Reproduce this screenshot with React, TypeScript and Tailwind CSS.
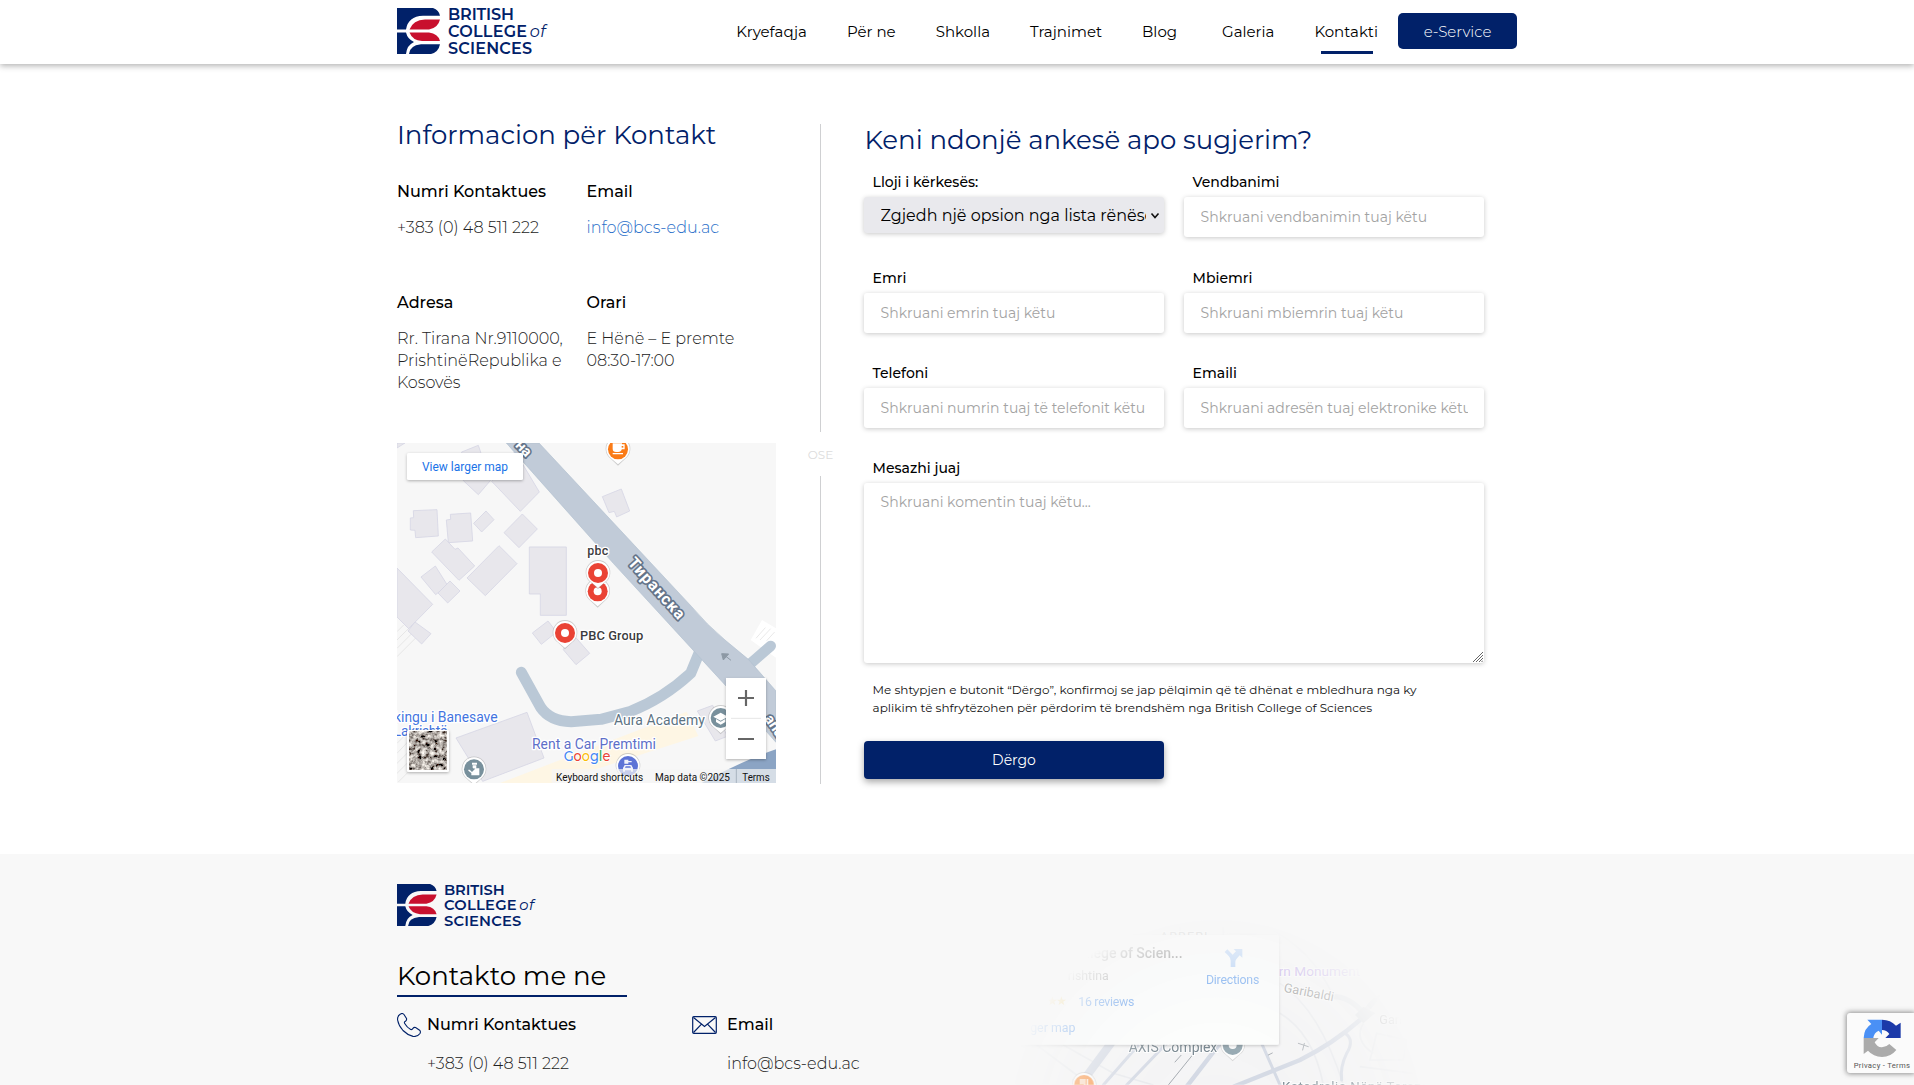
import type { ReactNode } from "react";

const NAV = ["Kryefaqja", "Për ne", "Shkolla", "Trajnimet", "Blog", "Galeria", "Kontakti"];

function Logo({ className }: { className: string }) {
  return (
    <svg viewBox="0 0 151 46" preserveAspectRatio="none" overflow="visible" className={className}>
      <g fill="#012169">
        <path d="M0 0H36Q42 2 43 7.8H26Q11 8.500 9 21.500H0Z" />
        <path d="M0 24.500H9Q10.500 31 17 34Q10 37 9 46H0Z" />
        <path d="M24 36.200H43Q41.500 44 34 46H12Q12.500 37.500 24 36.200Z" />
      </g>
      <g fill="#c8102e">
        <path d="M43 11.500H28Q16 12 12.500 21.500H32Q41 20 43 11.500Z" />
        <path d="M12.500 24.500H32Q41 25.500 43 33H25Q15.500 32.500 12.500 24.500Z" />
      </g>
      <g className="font-['Montserrat',sans-serif] text-[16px] font-semibold" fill="#012169">
        <text x="51" y="12.300" textLength="66">BRITISH</text>
        <text x="51" y="28.900" textLength="79">COLLEGE</text>
        <text x="51" y="45.600" textLength="84">SCIENCES</text>
        <text x="132.700" y="28.900" className="font-normal italic" textLength="16">of</text>
      </g>
    </svg>
  );
}

function Pin({ x, y, fill, children }: { x: number; y: number; fill: string; children?: ReactNode }) {
  return (
    <g transform={`translate(${x} ${y})`}>
      <path d="M0 49L-22 28A37 37 0 1 1 22 28Z" fill="#9a9a9a" opacity=".45" />
      <path d="M0 45L-22 26A35 35 0 1 1 22 26Z" fill="#fff" />
      <circle r="30" fill={fill} />
      {children ?? <circle r="12" fill="#fff" />}
    </g>
  );
}

function ContactMap() {
  return (
    <svg viewBox="0 0 379 340" className="block h-[340px] w-[379px] font-['Roboto',sans-serif]">
      <defs>
        <filter id="terrain" x="0" y="0" width="100%" height="100%">
          <feTurbulence type="fractalNoise" baseFrequency="0.08" numOctaves="4" seed="8" />
          <feColorMatrix values="1.900 0 0 0 -.5  1.850 0 0 0 -.51  1.750 0 0 0 -.49  0 0 0 0 1" />
        </filter>
        <filter id="soft" x="-20%" y="-20%" width="140%" height="150%">
          <feDropShadow dx="0" dy="3" stdDeviation="4" floodOpacity=".3" />
        </filter>
      </defs>
      <rect width="379" height="340" fill="#f7f7f7" />
      <g transform="translate(-17 -13) scale(.33333)">
        <path d="M1112 630L1146 570L1200 602V692Z" fill="#fff" />
        <path d="M1128 625l28-32M1140 630l32-34M1160 632l24-26M51 605l20-20M51 630l50-50M51 655l65-65M51 680l65-65" stroke="#dedede" strokeWidth="2" />
        <path d="M51 940l30-30M51 970l32-34M51 1000l34-34M51 1030l38-38M55 1056l34-34" stroke="#dedede" strokeWidth="2" />
        <path d="M360 1059L920 845L955 918L520 1059Z" fill="#fef6e4" />
        <g fill="#e8e7ec" stroke="#d6d6e4" strokeWidth="2.500">
          <path d="M51 39h24L51 54Z" />
          <path d="M245 66l50-20 36 106-36 42-45-42Z" />
          <path d="M335 154l70-90 73 122-57 58Z" />
          <path d="M100 242l71-3 4 79-68 5-2-22-14-1 0-36 10-1Z" />
          <path d="M211 253l61-4 6 84-73 5-6-68 13-2Z" />
          <path d="M281 280l37-37 24 26-37 37Z" />
          <path d="M372 308l55-56 45 45-55 56Z" />
          <path d="M155 366l41-39 29 31 9-4 50 54-47 43Z" />
          <path d="M261 444l96-97 54 54-95 96Z" />
          <path d="M123 441l43-33 36 57-35 29Z" />
          <path d="M174 489l36-36 30 30-37 36Z" />
          <path d="M51 414l107 109-72 73-35-35Z" />
          <path d="M84 603l21-27 48 35-28 31Z" />
          <path d="M448 351h111v205h-78v-64h-33Z" />
          <path d="M457 609l47-36 26 33-46 37Z" />
          <path d="M549 658l38-36 42 48-41 34Z" />
          <path d="M667 200l57-23 25 66-39 18-7-17-16 4Z" />
          <path d="M228 924l213-77 51 137-184 70Z" />
          <path d="M952 843l46-17 44 93-36 14Z" />
        </g>
        <path d="M424 727L482 832Q510 873 573 875L663 868L750 845Q850 806 932 730L965 650" fill="none" stroke="#bac8d6" strokeWidth="33" strokeLinecap="round" strokeLinejoin="round" />
        <path d="M1110 702L1172 648" stroke="#bac8d6" strokeWidth="32" strokeLinecap="round" />
        <path d="M379 39H477L935 530Q980 584 1035 630L1105 688L1188 783V937L1040 770L700 400Z" fill="#c1cbd8" stroke="#b1bfce" strokeWidth="2" />
        <path d="M965 1059Q1080 995 1188 958V1059Z" fill="#8ba4c4" />
        <path d="M1053 691l-23-18M1025 671l21 1-16 18Z" stroke="#8d99a5" fill="#8d99a5" strokeWidth="3" />
        <g className="font-bold" fill="#fff" stroke="#647489" strokeWidth="10" paintOrder="stroke" strokeLinejoin="round">
          <text transform="translate(741 400) rotate(48)" fontSize="48" textLength="230">Тиранска</text>
          <text transform="translate(404 48) rotate(46)" fontSize="44">на</text>
          <text transform="translate(1152 866) rotate(56)" fontSize="44">ana</text>
        </g>
        <g stroke="#fff" strokeWidth="8" paintOrder="stroke" strokeLinejoin="round">
          <g className="font-medium" fill="#3c3c40">
            <text x="622" y="374" fontSize="38" textLength="63">pbc</text>
          </g>
          <g fill="#4374e0" fontSize="42">
            <text x="42" y="876" textLength="311">kingu i Banesave</text>
            <text x="42" y="918" textLength="160">Lakrishtë</text>
          </g>
        </g>
        <Pin x={653} y={484} fill="#ea4335" />
        <Pin x={654} y={429} fill="#ea4335" />
        <Pin x={555} y={609} fill="#ea4335" />
        <Pin x={714} y={58} fill="#fa7b17">
          <path d="M-14-16H10V-2Q8 6 0 6H-5Q-14 6-14-2ZM10-13H18V-2H10M-16 13H15" fill="#fff" stroke="#fff" strokeWidth="4" />
          <path d="M11-10h5v5h-5Z" fill="#fa7b17" />
        </Pin>
        <Pin x={1022} y={864} fill="#78909c">
          <path d="M0-16L22-4 0 8-22-4ZM-14 3V12L0 20 14 12V3L0 11Z" fill="#fff" />
        </Pin>
        <Pin x={744} y={1008} fill="#5c73d6">
          <path d="M-11-19H1V-15H11V-11H1V-7H-11ZM-10-3H10L15 6V17H9V13H-9V17H-15V6Z" fill="#fff" opacity=".9" />
          <path d="M-7 1H7L9 5H-9Z" fill="#5c73d6" />
        </Pin>
        <Pin x={282} y={1018} fill="#78909c">
          <path d="M-6-20H9V-14H-6ZM-4-12H7V-5Q2 0-4-5ZM-17 1H-13L-6 8 5-3H16V18H-8V11L-17 4Z" fill="#fff" />
        </Pin>
        <g stroke="#fff" strokeWidth="8" paintOrder="stroke" strokeLinejoin="round">
          <text x="600" y="629" fontSize="39" className="font-medium" fill="#3c3c40" textLength="190">PBC Group</text>
          <text x="702" y="886" fontSize="42" fill="#5d7383" textLength="273">Aura Academy</text>
          <text x="456" y="958" fontSize="42" fill="#5e6fc9" textLength="372">Rent a Car Premtimi</text>
        </g>
        <text x="551" y="993" stroke="#fff" strokeWidth="5" paintOrder="stroke" fontSize="43" textLength="140" lengthAdjust="spacingAndGlyphs" className="font-['Montserrat',sans-serif] font-medium">
          <tspan fill="#4285f4">G</tspan><tspan fill="#ea4335">o</tspan><tspan fill="#fbbc04">o</tspan><tspan fill="#4285f4">g</tspan><tspan fill="#34a853">l</tspan><tspan fill="#ea4335">e</tspan>
        </text>
        <rect x="515" y="1017" width="673" height="42" fill="#f5f5f5" opacity=".7" />
        <path d="M1069 1017V1059" stroke="#a9b5c0" strokeWidth="3" />
        <g fill="#111" fontSize="32">
          <text x="528" y="1053" textLength="262" lengthAdjust="spacingAndGlyphs">Keyboard shortcuts</text>
          <text x="825" y="1053" textLength="225" lengthAdjust="spacingAndGlyphs">Map data ©2025</text>
          <text x="1087" y="1053" textLength="82" lengthAdjust="spacingAndGlyphs">Terms</text>
        </g>
        <g filter="url(#soft)">
          <rect x="81" y="69" width="348" height="81" rx="5" fill="#fff" />
          <rect x="1038" y="744" width="120" height="243" fill="#fff" />
          <rect x="81" y="900" width="126" height="126" rx="5" fill="#fff" />
        </g>
        <rect x="87" y="906" width="114" height="114" filter="url(#terrain)" />
        <text x="126" y="123" fontSize="37" fill="#1a73e8" textLength="258" lengthAdjust="spacingAndGlyphs">View larger map</text>
        <path d="M1053 865H1143" stroke="#e6e6e6" strokeWidth="3" />
        <path d="M1074 804H1122M1098 780V828M1074 927H1122" stroke="#666" strokeWidth="6.500" />
      </g>
    </svg>
  );
}

function FooterMap() {
  return (
    <svg viewBox="0 0 1440 555" className="absolute top-[46px] left-[980px] h-[185px] w-[480px] font-['Roboto',sans-serif]">
      <defs>
        <radialGradient id="fade" gradientUnits="userSpaceOnUse" cx="710" cy="680" r="640">
          <stop offset="0" stopColor="#fff" stopOpacity=".9" />
          <stop offset=".4" stopColor="#fff" stopOpacity=".72" />
          <stop offset=".7" stopColor="#fff" stopOpacity=".4" />
          <stop offset="1" stopColor="#fff" stopOpacity="0" />
        </radialGradient>
        <mask id="disc">
          <rect width="1440" height="555" fill="url(#fade)" />
        </mask>
        <filter id="cardShadow">
          <feDropShadow dx="0" dy="3" stdDeviation="4" floodOpacity=".3" />
        </filter>
      </defs>
      <g mask="url(#disc)">
        <rect width="1440" height="555" fill="#f3f3f4" />
        <g fill="none" stroke="#e4e6ea" strokeWidth="5">
          <path d="M150 420L330 555M250 435L400 520L520 555M860 80Q1000 150 1060 290M900 250Q1020 330 1090 555M900 340Q1000 400 1030 555M1150 340L1250 230M1170 480L1190 400L1280 420L1270 480ZM1140 500L1300 520M600 80V110M730 80V105M1150 370Q1120 420 1180 460" />
        </g>
        <g fill="none" stroke="#c9d0de" strokeLinecap="round">
          <path d="M300 555L400 420" strokeWidth="24" />
          <path d="M370 555L480 430M440 555L560 430M845 430L900 555M1095 400Q1125 420 1100 460Q1080 500 1085 540" strokeWidth="9" />
          <path d="M620 560L720 430" strokeWidth="13" />
          <path d="M760 560L960 480Q1060 430 1140 360" strokeWidth="13" />
          <path d="M1060 290Q1110 290 1150 340L1185 300" strokeWidth="16" stroke="#dde1e6" />
          <path d="M1125 345L1150 320L1185 340L1150 370Z" fill="#d5d9de" stroke="none" />
          <path d="M565 555L690 400M585 486l18-20M955 430l30 10M968 450l5-20M865 465l12-6" strokeWidth="3" stroke="#8d949c" />
        </g>
        <g stroke="#fff" strokeWidth="6" paintOrder="stroke">
          <text x="540" y="124" fontSize="38" fill="#777" letterSpacing="3">ARBERI</text>
          <text x="896" y="228" fontSize="41" fill="#8e63dd" textLength="245">rn Monument</text>
          <text transform="translate(910 275) rotate(11)" fontSize="38" fill="#555" textLength="152">Garibaldi</text>
          <text x="1198" y="372" fontSize="38" fill="#666">Gari</text>
          <text x="446" y="457" fontSize="42" fill="#4d616d" textLength="266">AXIS Complex</text>
          <text x="906" y="572" fontSize="40" fill="#4d616d" textLength="440">Katedralja Nënë Tereza</text>
        </g>
        <Pin x={758} y={435} fill="#78909c" />
        <Pin x={312} y={555} fill="#fa7b17">
          <path d="M-10-18V-2M-4-18V-2M2-18V0M10-18V0" stroke="#fff" strokeWidth="4" />
        </Pin>
        <rect x="-20" y="105" width="917" height="329" rx="5" fill="#fdfffe" filter="url(#cardShadow)" />
        <text x="608" y="174" textAnchor="end" fontSize="42" className="font-medium" fill="#222">llege of Scien...</text>
        <text x="386" y="239" textAnchor="end" fontSize="37" fill="#444">rishtina</text>
        <text x="200" y="314" fontSize="36" fill="#f5b400" textLength="60">★★</text>
        <g fill="#1a73e8" fontSize="37">
          <text x="295" y="318" textLength="168">16 reviews</text>
          <text x="286" y="396" textAnchor="end">ger map</text>
          <text x="678" y="252" textLength="160">Directions</text>
        </g>
        <path d="M752 201V182Q752 174 746 168L734 156L742 148L758 164L768 154L761 147H787V173L779 166L770 176Q766 180 766 186V201Z" fill="#7fb2f5" />
      </g>
    </svg>
  );
}

function Info({ title, children }: { title: string; children: ReactNode }) {
  return (
    <div>
      <h3 className="font-medium text-black">{title}</h3>
      <div className="mt-[14px] font-light text-[#222]">{children}</div>
    </div>
  );
}

function Field({ label, placeholder }: { label: string; placeholder: string }) {
  return (
    <label className="block text-[14px] leading-5">
      <span className="ml-[8.6px] block font-medium text-black">{label}</span>
      <input
        placeholder={placeholder}
        className="mt-[5px] block h-10 w-full rounded-[3px] bg-white pr-4 pl-[16.6px] font-normal shadow-[0_1px_5px_rgba(0,0,0,0.22)] placeholder:text-[#a3a3a3]"
      />
    </label>
  );
}

function RecaptchaBadge() {
  return (
    <div className="absolute top-[1013px] right-0 h-[60px] w-[67px] rounded-l-[3px] bg-[#fbfbfb] shadow-[0_0_5px_1px_rgba(110,110,110,0.75)]">
      <svg viewBox="141 99 201 180" className="h-[60px] w-[67px] font-['Roboto',sans-serif]">
        <path d="M191 174Q192 145 214 132L202 119H246V164L236 152Q222 158 220 174Z" fill="#4a90f5" />
        <path d="M246 119Q272 119 288 137L302 128V174H256L268 162Q260 150 246 150Z" fill="#1c3aa9" />
        <path d="M191 174H236L224 187Q232 203 246 202Q258 202 268 192L289 210Q272 231 246 231Q220 230 204 212L191 222Z" fill="#ababab" />
        <text x="161" y="263" fontSize="23" fill="#555" textLength="169">Privacy - Terms</text>
      </svg>
    </div>
  );
}

export default function App() {
  return (
    <div className="relative h-[1085px] overflow-hidden bg-white font-['Montserrat',sans-serif] text-[16px] leading-[22px]">
      <header className="relative h-16 bg-white shadow-[0_2px_6px_rgba(0,0,0,0.3)]">
        <div className="mx-auto flex h-[62px] w-[1120px] items-center">
          <Logo className="h-[46px] w-[151px]" />
          <nav className="ml-auto flex items-center pt-[2px] text-[15px] text-black">
            {NAV.map((item) => (
              <a
                key={item}
                className={
                  item === "Kontakti"
                    ? "relative px-5 after:absolute after:top-[30px] after:left-[26.6px] after:h-[3px] after:w-[52px] after:bg-[#012169]"
                    : item === "Blog"
                      ? "pr-[25px] pl-5"
                      : "px-5"
                }
              >
                {item}
              </a>
            ))}
          </nav>
          <button className="h-9 w-[119px] rounded-[5px] bg-[#012169] pt-[2px] text-[15px] font-light text-white">e-Service</button>
        </div>
      </header>

      <main className="mx-auto flex h-[790px] w-[1120px] pt-[52px]">
        <section className="w-[379px] pt-px">
          <h2 className="text-[26px] leading-9 text-[#012169]">Informacion për Kontakt</h2>
          <div className="mt-7 grid h-[262px] grid-cols-2 grid-rows-[111px_1fr]">
            <Info title="Numri Kontaktues">+383 (0) 48 511 222</Info>
            <Info title="Email">
              <a className="text-[#2a6fc9]">info@bcs-edu.ac</a>
            </Info>
            <Info title="Adresa">
              Rr. Tirana Nr.9110000,
              <br />
              PrishtinëRepublika e<br />
              Kosovës
            </Info>
            <Info title="Orari">
              E Hënë – E premte
              <br />
              08:30-17:00
            </Info>
          </div>
          <ContactMap />
        </section>

        <div className="mt-2 ml-[31px] flex w-[27px] flex-col items-center text-[12px] text-[#dcdcdc]">
          <div className="h-[308px] w-px bg-[#cfd0d2]" />
          <span className="flex h-11 items-center pt-[2px]">OSE</span>
          <div className="h-[308px] w-px bg-[#cfd0d2]" />
        </div>

        <form className="mt-[6px] ml-[30px] w-[620px]">
          <h2 className="pl-[0.5px] text-[26px] leading-9 text-[#012169]">Keni ndonjë ankesë apo sugjerim?</h2>
          <div className="mt-[14.33px] grid grid-cols-2 gap-x-5 gap-y-[30.33px]">
            <label className="block">
              <span className="ml-[8.6px] block text-[14px] leading-5 font-medium text-black">Lloji i kërkesës:</span>
              <span className="relative mt-[5px] block">
                <select className="block h-9 w-full appearance-none rounded-[3px] bg-[#e9e9ed] pt-[2px] pr-[18px] pl-[16.6px] text-black shadow-[0_1px_5px_rgba(0,0,0,0.22)]">
                  <option>Zgjedh një opsion nga lista rënëse</option>
                </select>
                <svg viewBox="0 0 10 8" className="absolute top-[15px] right-1 h-2 w-[10px]" fill="none" stroke="#111" strokeWidth="1.600">
                  <path d="M1.500 1.500L5 5.500L8.500 1.500" />
                </svg>
              </span>
            </label>
            <Field label="Vendbanimi" placeholder="Shkruani vendbanimin tuaj këtu" />
            <Field label="Emri" placeholder="Shkruani emrin tuaj këtu" />
            <Field label="Mbiemri" placeholder="Shkruani mbiemrin tuaj këtu" />
            <Field label="Telefoni" placeholder="Shkruani numrin tuaj të telefonit këtu" />
            <Field label="Emaili" placeholder="Shkruani adresën tuaj elektronike këtu" />
            <label className="relative col-span-2 block text-[14px] leading-5">
              <span className="ml-[8.6px] block font-medium text-black">Mesazhi juaj</span>
              <textarea
                placeholder="Shkruani komentin tuaj këtu..."
                className="mt-[5px] block h-[180px] w-full resize-none rounded-[3px] bg-white py-[9px] pr-4 pl-[16.6px] shadow-[0_1px_5px_rgba(0,0,0,0.22)] placeholder:text-[#a3a3a3]"
              />
              <svg viewBox="0 0 11 11" className="absolute right-[1px] bottom-[1px] size-[11px]" stroke="#666" strokeWidth="1">
                <path d="M1 11L11 1M4 11L11 4M7 11L11 7M9.500 11L11 9.500" />
              </svg>
            </label>
          </div>
          <p className="mt-[17.67px] ml-[8.6px] text-[12px] leading-[18px] text-[#111]">
            Me shtypjen e butonit “Dërgo”, konfirmoj se jap pëlqimin që të dhënat e mbledhura nga ky
            <br />
            aplikim të shfrytëzohen për përdorim të brendshëm nga British College of Sciences
          </p>
          <button type="button" className="mt-6 block h-[38px] w-[300px] rounded-[4px] bg-[#012169] text-[14px] text-white shadow-[0_3px_7px_rgba(0,0,0,0.35)]">
            Dërgo
          </button>
        </form>
      </main>

      <footer className="relative h-[231px] bg-[#f8f8f8]">
        <FooterMap />
        <div className="mx-auto w-[1120px] pt-[30px]">
          <Logo className="h-[42px] w-[139px]" />
          <h2 className="mt-8 h-[39px] w-[230px] border-b-2 border-[#012169] text-[26px] leading-9 text-black">Kontakto me ne</h2>
          <div className="mt-4 grid grid-cols-[295px_1fr]">
            <div className="flex gap-[6px]">
              <svg viewBox="0 0 24 24" className="size-6" fill="none" stroke="#012169" strokeWidth="1.100">
                <path d="M3.500 1Q5.500-.2 7 1.500L9.500 5.500Q10 7 8.500 8.200Q6.800 9 7.700 10.500Q10 14.500 13.700 16.500Q15.200 17 16 15.300Q17 14 18.600 14.600L22.600 17.200Q24 18.500 23 20.500Q20.500 24 16 23.400Q10.500 22 6 17.500Q1.500 12.500.6 7Q.2 2.800 3.500 1Z" />
              </svg>
              <div className="pt-px">
                <h3 className="font-medium text-black">Numri Kontaktues</h3>
                <p className="mt-[17px] font-light text-[#222]">+383 (0) 48 511 222</p>
              </div>
            </div>
            <div className="flex gap-[10px]">
              <svg viewBox="0 0 25 18" className="mt-[3px] h-[18px] w-[25px]" fill="none" stroke="#012169" strokeWidth="1.200">
                <rect x=".7" y=".7" width="23.600" height="16.600" rx="1" />
                <path d="M1.500 1.500L12.500 10.500L23.500 1.500M1.500 16.500L9.500 8.200M23.500 16.500L15.500 8.200" />
              </svg>
              <div className="pt-px">
                <h3 className="font-medium text-black">Email</h3>
                <p className="mt-[17px] font-light text-[#222]">info@bcs-edu.ac</p>
              </div>
            </div>
          </div>
        </div>
      </footer>
      <RecaptchaBadge />
    </div>
  );
}
